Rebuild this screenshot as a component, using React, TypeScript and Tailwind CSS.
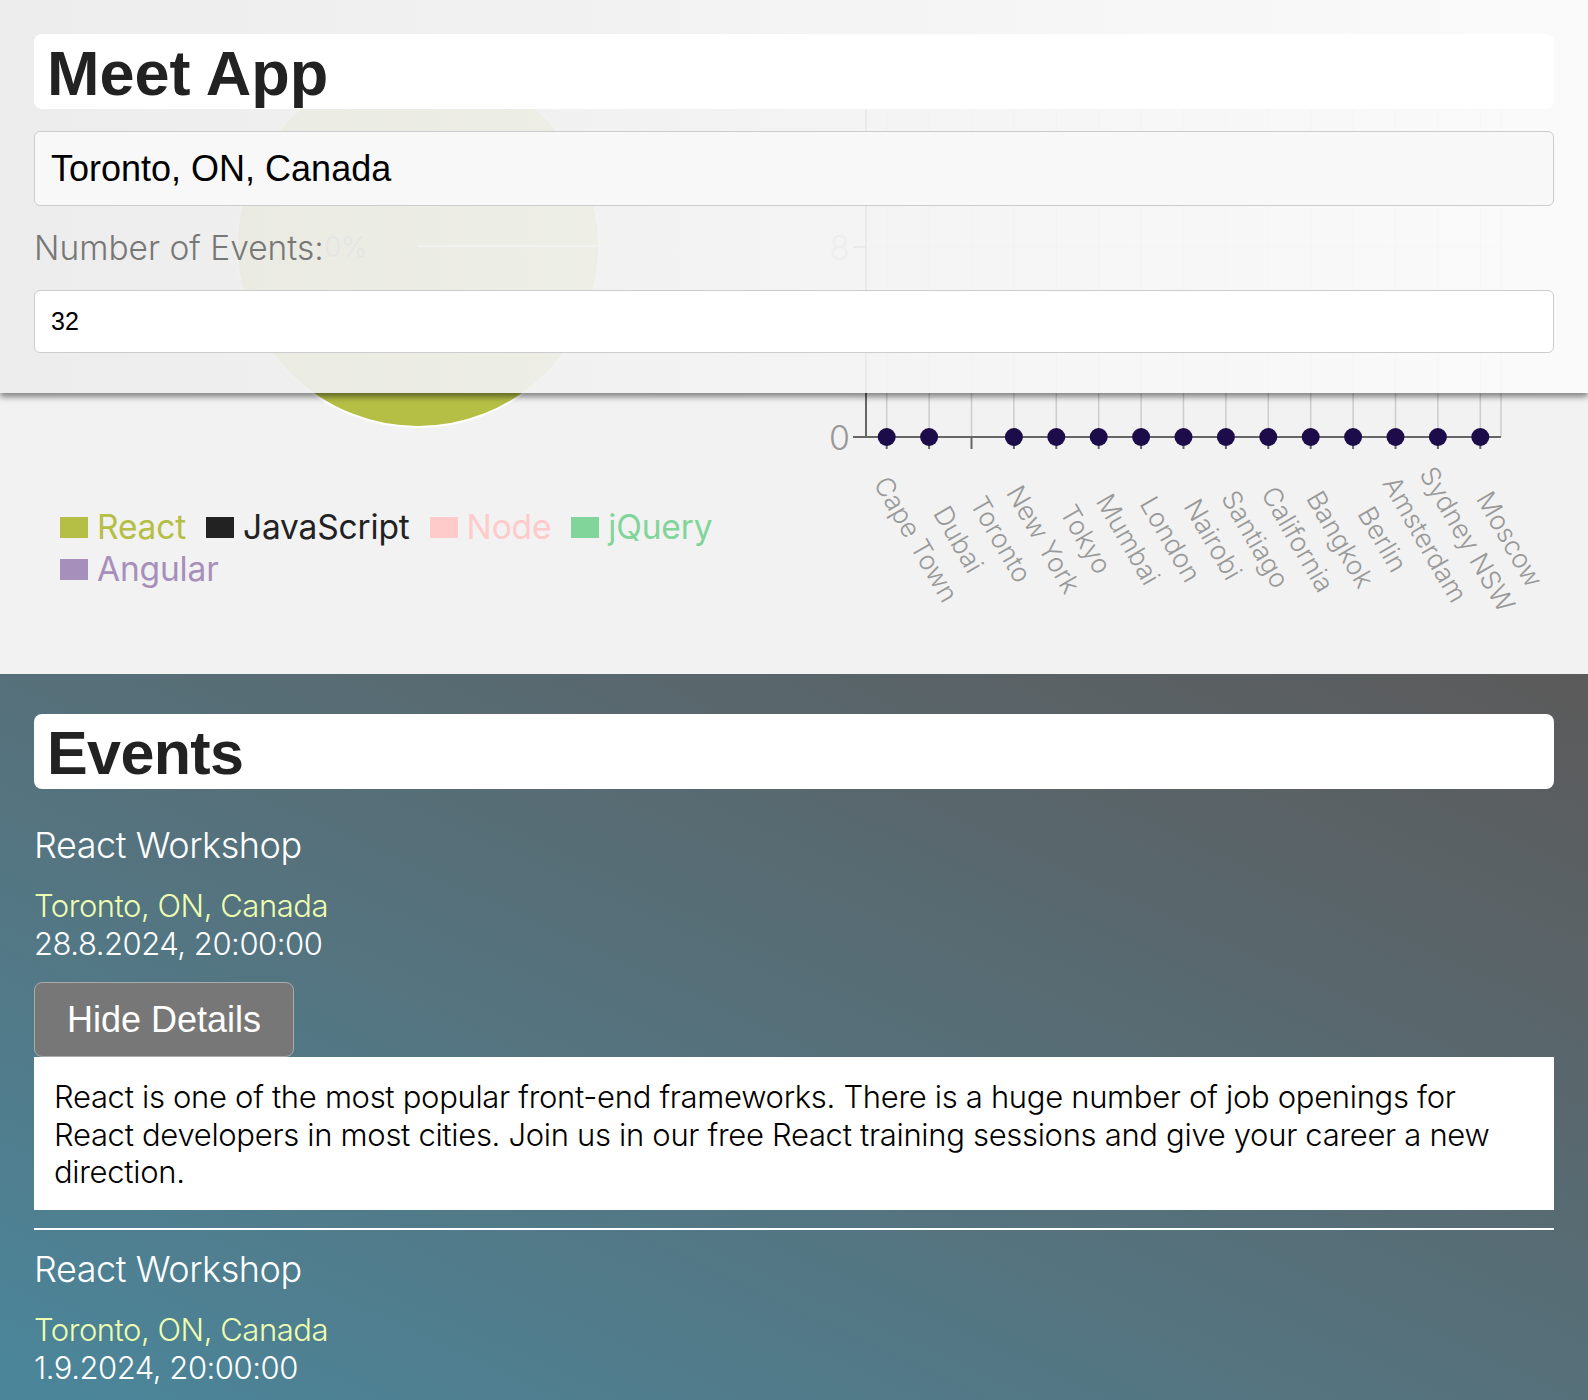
import React from 'react';

const CITIES = [
  'Cape Town',
  'Dubai',
  'Toronto',
  'New York',
  'Tokyo',
  'Mumbai',
  'London',
  'Nairobi',
  'Santiago',
  'California',
  'Bangkok',
  'Berlin',
  'Amsterdam',
  'Sydney NSW',
  'Moscow',
];
const COUNTS: Record<string, number> = { Toronto: 32 };

const LEGEND = [
  { name: 'React', color: '#b5be45' },
  { name: 'JavaScript', color: '#222222' },
  { name: 'Node', color: '#ffcaca' },
  { name: 'jQuery', color: '#82d59a' },
  { name: 'Angular', color: '#a78fbb' },
];

const EVENTS = [
  { id: 1, title: 'React Workshop', location: 'Toronto, ON, Canada', date: '28.8.2024, 20:00:00', open: true },
  { id: 2, title: 'React Workshop', location: 'Toronto, ON, Canada', date: '1.9.2024, 20:00:00', open: false },
];

const DESCRIPTION =
  'React is one of the most popular front-end frameworks. There is a huge number of job openings for React developers in most cities. Join us in our free React training sessions and give your career a new direction.';

// chart geometry, in page pixels
const X0 = 886.7;
const STEP = 42.4;
const Y0 = 437;
const PER_UNIT = 190 / 8;
const LEFT = 866;
const RIGHT = 1501;
const TOP = 50;

const PieChart = () => (
  <svg width={836} height={506} viewBox="0 0 836 506" className="block overflow-visible">
    <circle cx={418} cy={246} r={181} fill="#b5be45" stroke="#ffffff" strokeWidth={2} />
    <line x1={418} y1={246} x2={599} y2={246} stroke="#ffffff" strokeWidth={2} />
    <text x={324} y={257} fontSize={28} fill="#555555" fontFamily="Inter, sans-serif" fontWeight={300}>
      0%
    </text>
  </svg>
);

const CityChart = () => {
  const yTicks = [0, 8, 16];
  return (
    <svg width={752} height={674} viewBox="836 0 752 674" className="block overflow-visible">
      {yTicks.map((t) => (
        <line key={`h${t}`} x1={LEFT} x2={RIGHT} y1={Y0 - t * PER_UNIT} y2={Y0 - t * PER_UNIT} stroke="#dddddd" strokeWidth={1.5} />
      ))}
      {CITIES.map((c, i) => (
        <line key={`v${c}`} x1={X0 + i * STEP} x2={X0 + i * STEP} y1={TOP} y2={Y0} stroke="#cccccc" strokeWidth={1.5} />
      ))}
      <line x1={RIGHT} x2={RIGHT} y1={TOP} y2={Y0} stroke="#cccccc" strokeWidth={1.5} />
      <line x1={LEFT} x2={LEFT} y1={TOP} y2={Y0} stroke="#666666" strokeWidth={2} />
      <line x1={LEFT} x2={RIGHT} y1={Y0} y2={Y0} stroke="#666666" strokeWidth={2} />
      {yTicks.map((t) => (
        <g key={`t${t}`}>
          <line x1={853} x2={LEFT} y1={Y0 - t * PER_UNIT} y2={Y0 - t * PER_UNIT} stroke="#666666" strokeWidth={2} />
          <text
            x={850}
            y={Y0 - t * PER_UNIT}
            textAnchor="end"
            dominantBaseline="central"
            fontSize={34}
            fill="#999999"
            fontFamily="Inter, sans-serif"
            fontWeight={300}
          >
            {t}
          </text>
        </g>
      ))}
      {CITIES.map((c, i) => {
        const x = X0 + i * STEP;
        return (
          <g key={c}>
            <line x1={x} x2={x} y1={Y0} y2={Y0 + 12} stroke="#666666" strokeWidth={2} />
            {(COUNTS[c] ?? 0) < 16 && <circle cx={x} cy={Y0 - (COUNTS[c] ?? 0) * PER_UNIT} r={9} fill="#1d0c4a" />}
            <text
              x={x + 30}
              y={539}
              textAnchor="middle"
              dominantBaseline="central"
              transform={`rotate(60 ${x + 30} 539)`}
              fontSize={26.5}
              fill="#999999"
              fontFamily="Inter, sans-serif"
              fontWeight={300}
            >
              {c}
            </text>
          </g>
        );
      })}
    </svg>
  );
};

function App() {
  return (
    <div className="relative h-[1400px] overflow-hidden font-['Inter',sans-serif]">
      {/* fixed search panel */}
      <header className="absolute top-0 left-0 right-0 z-10 h-[393px] px-[34px] pt-[34px] bg-linear-to-r from-[rgba(236,236,236,0.93)] to-[rgba(251,251,251,0.93)] shadow-[0_4px_6px_rgba(0,0,0,0.45)]">
        <div className="h-[75px] rounded-lg bg-white flex items-center pl-[13px] pt-[3px]">
          <h1 className="text-[63px] leading-none font-bold text-[#222] font-['Liberation_Sans',Arial,sans-serif]">Meet App</h1>
        </div>
        <input
          className="mt-[22px] block w-full h-[75px] rounded-md border border-[#cccccc] bg-[#f8f8f8] px-[16px] text-[36px] text-black font-['Liberation_Sans',Arial,sans-serif] outline-none"
          defaultValue="Toronto, ON, Canada"
        />
        <label className="mt-[22px] block text-[33.5px] leading-[40px] font-light text-[#777]">Number of Events:</label>
        <input
          className="mt-[22px] block w-full h-[63px] rounded-md border border-[#cccccc] bg-white px-[16px] text-[25px] text-black font-['Liberation_Sans',Arial,sans-serif] outline-none"
          defaultValue="32"
        />
      </header>

      {/* charts */}
      <section className="h-[674px] bg-[#f2f2f2] flex">
        <div className="w-[836px]">
          <PieChart />
          <ul className="ml-[60px] w-[740px] flex flex-wrap gap-x-[20px] text-[33.5px] leading-[42px] tracking-[-0.005em]">
            {LEGEND.map((l) => (
              <li key={l.name} className="flex items-center gap-[9px]" style={{ color: l.color }}>
                <span className="w-[28px] h-[21px]" style={{ backgroundColor: l.color }} />
                <span>{l.name}</span>
              </li>
            ))}
          </ul>
        </div>
        <CityChart />
      </section>

      {/* events */}
      <section className="h-[726px] px-[34px] pt-[40px] bg-linear-to-tr from-[#4a869b] to-[#5b5a5a]">
        <div className="h-[75px] rounded-lg bg-white flex items-center pl-[13px] pt-[3px]">
          <h2 className="text-[61px] leading-none font-bold text-[#222] tracking-[-0.01em] font-['Liberation_Sans',Arial,sans-serif]">Events</h2>
        </div>
        <ul>
          {EVENTS.map((ev, i) => (
            <li key={ev.id}>
              {i > 0 && <hr className="mt-[18px] h-[2px] border-0 bg-white" />}
              <h3
                className={`${i === 0 ? 'mt-[35px]' : 'mt-[18px]'} text-[36px] leading-[43px] font-light tracking-[-0.012em] text-white`}
              >
                {ev.title}
              </h3>
              <p className="mt-[20px] text-[31px] leading-[38px] font-light tracking-[-0.015em] text-[#eeffb0]">{ev.location}</p>
              <p className="text-[31px] leading-[38px] font-light tracking-[-0.015em] text-white">{ev.date}</p>
              {ev.open && (
                <>
                  <button className="mt-[19px] block w-[260px] h-[75px] rounded-lg border border-[#aaaaaa] bg-[#777777] text-white text-[36px] font-['Liberation_Sans',Arial,sans-serif]">
                    Hide Details
                  </button>
                  <div className="bg-white px-[20px] pt-[21px] pb-[19px] text-[31px] leading-[37.5px] font-light tracking-[-0.01em] text-black">
                    {DESCRIPTION}
                  </div>
                </>
              )}
            </li>
          ))}
        </ul>
      </section>
    </div>
  );
}

export default App;
